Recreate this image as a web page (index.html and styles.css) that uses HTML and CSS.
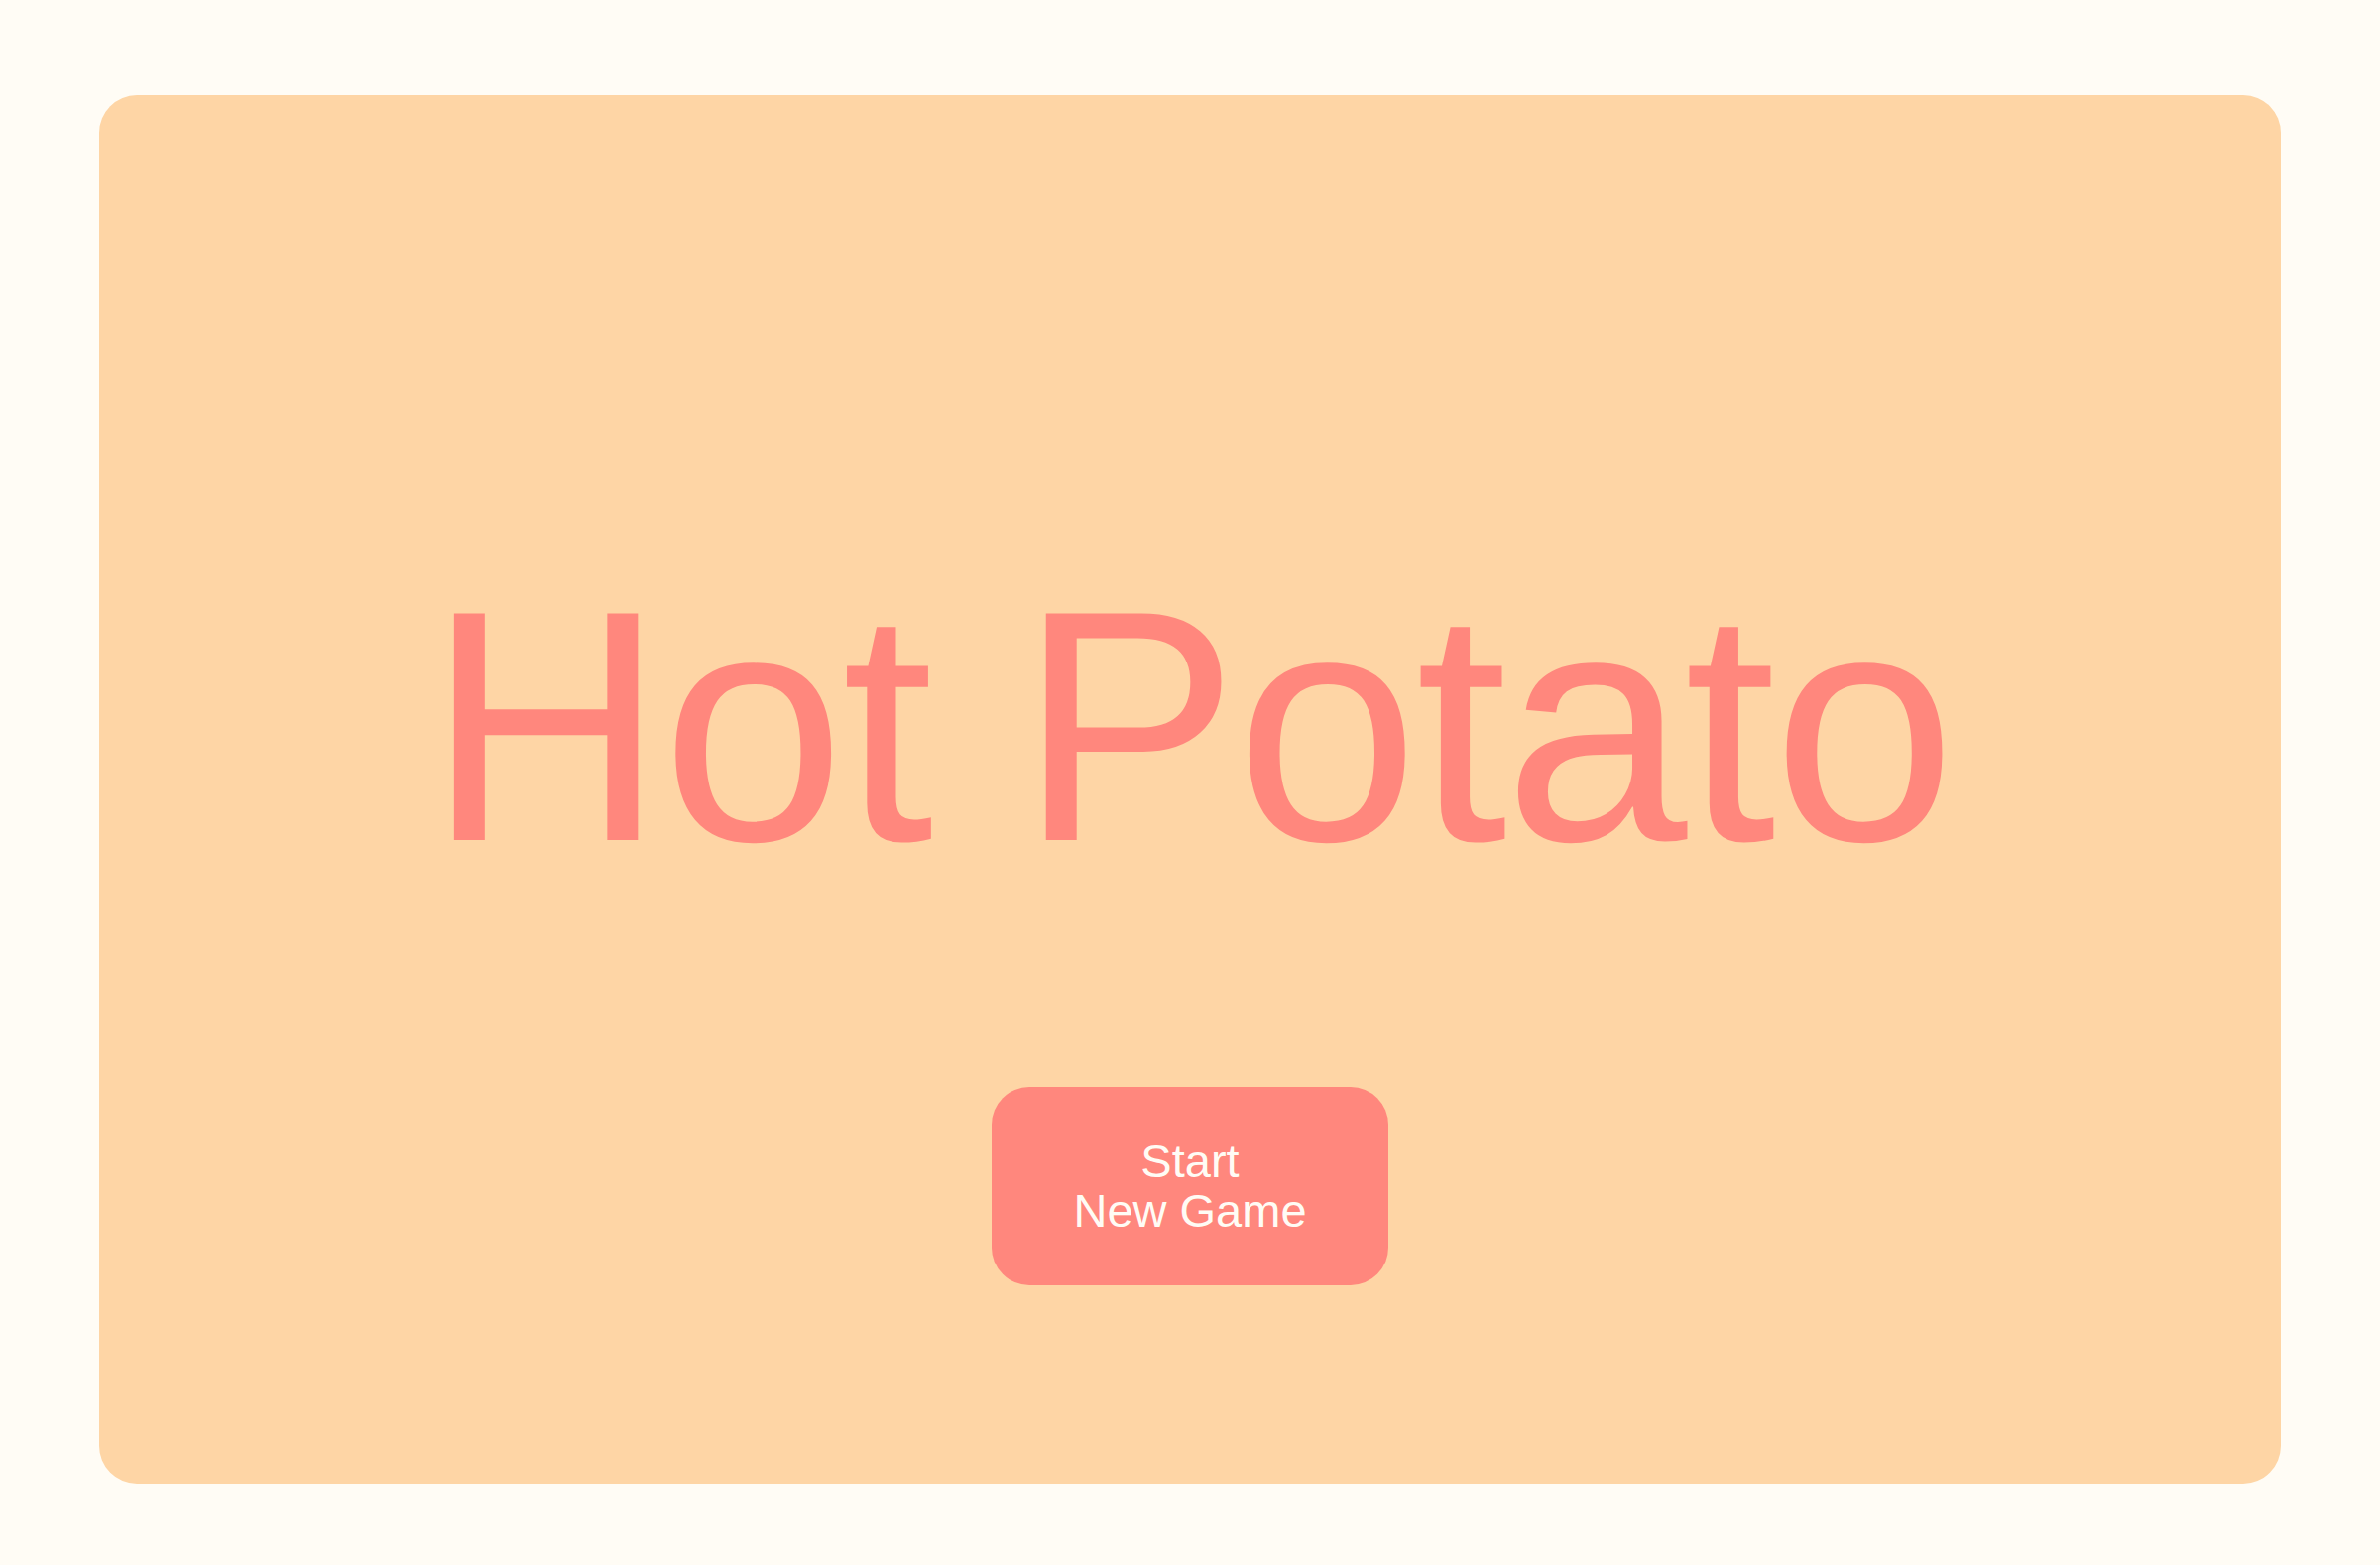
FILE: index.html
```html
<!DOCTYPE html>
<html>
<head>
<meta charset="utf-8">
<link rel="stylesheet" href="styles.css">
<title>Hot Potato</title>
</head>
<body>
<main class="page">
  <section class="card">
    <h1 class="title">Hot Potato</h1>
    <button class="start">Start<br>New Game</button>
  </section>
</main>
</body>
</html>
```
FILE: styles.css
```css
html, body {
  margin: 0;
  padding: 0;
  background: #fffcf5;
}
.page {
  box-sizing: border-box;
  width: 2400px;
  height: 1578px;
  padding: 96px 100px 82px;
}
.card {
  box-sizing: border-box;
  width: 2200px;
  height: 1400px;
  background: #fed5a5;
  border-radius: 38px;
  display: flex;
  flex-direction: column;
  align-items: center;
  padding-top: 476px;
}
.title {
  margin: 0;
  font-family: "Comic Sans MS", "Liberation Sans", sans-serif;
  font-weight: normal;
  font-size: 332px;
  line-height: 320px;
  letter-spacing: -3px;
  color: #ff877d;
}
.start {
  margin-top: 204px;
  width: 400px;
  height: 200px;
  border: none;
  border-radius: 38px;
  background: #ff877d;
  color: #fffcf5;
  font-family: "Comic Sans MS", "Liberation Sans", sans-serif;
  font-size: 47px;
  line-height: 50px;
  padding: 0;
}
```
